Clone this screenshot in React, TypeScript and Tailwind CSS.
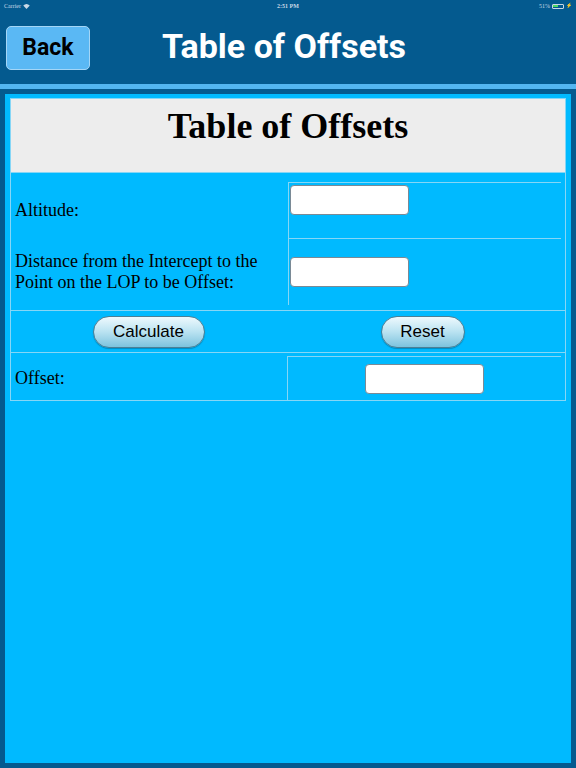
import React from "react";

const line = "border-[#86d6f6]";

function Field() {
  return <div className="h-[30px] w-[119px] rounded-[4px] border border-[#7a8a96] bg-white" />;
}

function PillButton({ label, width }: { label: string; width: string }) {
  return (
    <button
      className={`${width} h-[32px] rounded-full border border-[#4c7f95] bg-gradient-to-b from-[#eef9fd] via-[#b9e2f1] to-[#7cc3dd] text-[17px] text-black shadow-[0_1px_1px_rgba(0,0,0,0.25)]`}
      style={{ fontFamily: "'Liberation Sans', Arial, sans-serif" }}
    >
      {label}
    </button>
  );
}

function StatusBar() {
  return (
    <div className="flex h-[12px] items-center justify-between px-[4px] text-[6px] text-[#c9d8e6]">
      <div className="flex w-[80px] items-center gap-[2px]">
        <span>Carrier</span>
        <svg width="7" height="5" viewBox="0 0 14 10">
          <path d="M7 10 L0.5 3.2 A9.5 9.5 0 0 1 13.5 3.2 Z" fill="#c9d8e6" />
        </svg>
      </div>
      <span className="font-bold">2:51 PM</span>
      <div className="flex w-[80px] items-center justify-end gap-[2px]">
        <span>51%</span>
        <div className="flex h-[5px] w-[12px] items-center rounded-[1px] border border-[#c9d8e6] p-[0.5px]">
          <div className="h-full w-[55%] bg-[#4cd964]" />
        </div>
        <span className="text-[5px]">⚡</span>
      </div>
    </div>
  );
}

export default function App() {
  return (
    <div className="flex h-[768px] w-[576px] flex-col bg-[#045a8f]" style={{ fontFamily: "'Liberation Serif', 'Times New Roman', serif" }}>
      <StatusBar />
      <div className="grid h-[72px] grid-cols-[1fr_auto_1fr] items-center">
        <div className="pl-[6px]">
          <button
            className="h-[44px] w-[84px] rounded-[5px] border border-[#a4d6f7] bg-[#5ab8f4] text-[23px] font-bold text-black"
            style={{ fontFamily: "Roboto, 'Liberation Sans', sans-serif" }}
          >
            Back
          </button>
        </div>
        <h1
          className="mb-[3px] mr-[8px] text-[34px] font-bold text-white"
          style={{ fontFamily: "Roboto, 'Liberation Sans', sans-serif" }}
        >
          Table of Offsets
        </h1>
        <div />
      </div>
      <div className="h-[5px] bg-[#53b6f1]" />

      <div className="mx-[5px] mb-[5px] mt-[5px] flex-1 bg-[#00baff] px-[5px] pt-[4px]">
        <div className={`border ${line} text-[18px] text-black`}>
          <div className={`flex h-[74px] items-start justify-center border-b ${line} bg-[#ededed] pt-[0px]`}>
            <h2 className="text-[36px] font-bold">Table of Offsets</h2>
          </div>

          <div className={`grid h-[138px] grid-cols-[273px_1fr] border-b ${line} pl-[4px] pr-[4px] pt-[9px]`}>
            <div className="flex flex-col">
              <div className="flex h-[56px] items-center">Altitude:</div>
              <div className="flex h-[67px] items-center leading-[21px]">
                Distance from the Intercept to the
                <br />
                Point on the LOP to be Offset:
              </div>
            </div>
            <div className="flex flex-col">
              <div className={`h-[56px] border-l border-t ${line} pl-[1px] pt-[2px]`}>
                <Field />
              </div>
              <div className={`flex h-[67px] items-center border-l border-t ${line} pl-[1px]`}>
                <Field />
              </div>
            </div>
          </div>

          <div className={`grid h-[42px] grid-cols-2 items-center border-b ${line}`}>
            <div className="flex justify-center pr-[2px]">
              <PillButton label="Calculate" width="w-[112px]" />
            </div>
            <div className="flex justify-center pr-[8px]">
              <PillButton label="Reset" width="w-[84px]" />
            </div>
          </div>

          <div className="grid h-[47px] grid-cols-[272px_1fr] pl-[4px] pr-[4px] pt-[3px]">
            <div className="flex items-center">Offset:</div>
            <div className={`flex items-center justify-center border-l border-t ${line}`}>
              <Field />
            </div>
          </div>
        </div>
      </div>
    </div>
  );
}
